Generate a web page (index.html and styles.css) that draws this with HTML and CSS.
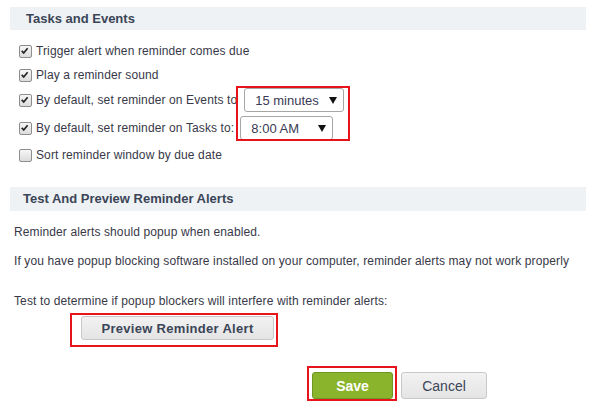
FILE: index.html
```html
<!DOCTYPE html>
<html lang="en">
<head>
    <meta charset="UTF-8">
    <meta name="viewport" content="width=device-width, initial-scale=1.0">
    <title>Reminder Settings</title>
    <link rel="stylesheet" href="styles.css">
</head>
<body>
    <div class="panel">
        <h2 class="section-title">Tasks and Events</h2>
        <div class="options">
            <div class="option row-1">
                <span class="check checked"><svg viewBox="0 0 13 13"><path d="M3 6.8 L5.4 9.2 L10 3.6"/></svg></span>
                <span>Trigger alert when reminder comes due</span>
            </div>
            <div class="option row-2">
                <span class="check checked"><svg viewBox="0 0 13 13"><path d="M3 6.8 L5.4 9.2 L10 3.6"/></svg></span>
                <span>Play a reminder sound</span>
            </div>
            <div class="option row-3">
                <span class="check checked"><svg viewBox="0 0 13 13"><path d="M3 6.8 L5.4 9.2 L10 3.6"/></svg></span>
                <span>By default, set reminder on Events to</span>
                <div class="select select-events"><span>15 minutes</span><span class="arrow"></span></div>
            </div>
            <div class="option row-4">
                <span class="check checked"><svg viewBox="0 0 13 13"><path d="M3 6.8 L5.4 9.2 L10 3.6"/></svg></span>
                <span>By default, set reminder on Tasks to:</span>
                <div class="select select-tasks"><span>8:00 AM</span><span class="arrow"></span></div>
            </div>
            <div class="option row-5">
                <span class="check"></span>
                <span>Sort reminder window by due date</span>
            </div>
            <!-- annotation around the two dropdowns -->
            <div class="highlight select-highlight"></div>
        </div>

        <h2 class="section-title section-title-second">Test And Preview Reminder Alerts</h2>
        <p class="note note-first">Reminder alerts should popup when enabled.</p>
        <p class="note">If you have popup blocking software installed on your computer, reminder alerts may not work properly</p>
        <p class="note note-test">Test to determine if popup blockers will interfere with reminder alerts:</p>
        <div class="preview-wrap">
            <span class="mark mark-preview"><button class="btn btn-gray btn-preview">Preview Reminder Alert</button></span>
        </div>

        <div class="actions">
            <span class="mark mark-save"><button class="btn btn-save">Save</button></span>
            <button class="btn btn-gray btn-cancel">Cancel</button>
        </div>
    </div>
</body>
</html>
```

FILE: styles.css
```css
body {
    margin: 0;
    font-family: "Liberation Sans", Arial, sans-serif;
    font-size: 12px;
    letter-spacing: 0.12px;
    color: #383848;
    background: #ffffff;
}

.panel {
    padding: 7px 3px 0 10px;
}

.section-title {
    margin: 0;
    height: 23px;
    line-height: 23px;
    padding-left: 16px;
    background: #eef2f4;
    font-size: 13px;
    font-weight: bold;
    letter-spacing: 0;
    color: #3b4557;
}

.section-title-second {
    margin-top: 20px;
    height: 24px;
    line-height: 24px;
    padding-left: 13px;
}

/* checkbox rows */
.options {
    position: relative;
    margin-top: 9px;
    padding-left: 9px;
}

.option {
    display: flex;
    align-items: center;
    height: 24px;
}

.row-3 {
    height: 26px;
}

.row-4 {
    height: 30px;
}

.check {
    width: 11px;
    height: 11px;
    border: 1px solid #8c8e90;
    border-radius: 2px;
    background: linear-gradient(#f6f6f6, #dcdcdc);
    margin-right: 4px;
    flex-shrink: 0;
}

.check svg {
    display: block;
    width: 11px;
    height: 11px;
}

.check path {
    fill: none;
    stroke: #262626;
    stroke-width: 2;
    transform: translate(-1px, -1px);
}

.select {
    display: flex;
    align-items: center;
    justify-content: space-between;
    box-sizing: border-box;
    height: 24px;
    border: 1px solid #a6a6a6;
    border-radius: 3px;
    background: #fff;
    font-size: 13px;
    letter-spacing: 0;
    color: #3a3a55;
    padding: 0 6px 0 10px;
}

.select-events {
    width: 100px;
    margin-left: 7px;
}

.select-tasks {
    width: 93px;
    margin-left: 6px;
}

.arrow {
    width: 0;
    height: 0;
    border-left: 4px solid transparent;
    border-right: 4px solid transparent;
    border-top: 7px solid #111;
}

.highlight {
    position: absolute;
    border: 2px solid #e8141b;
}

.select-highlight {
    left: 226px;
    top: 47px;
    width: 110px;
    height: 51px;
}

/* preview section */
.note {
    margin: 15px 0 0 4px;
    line-height: 14px;
}

.note-first {
    margin-top: 14px;
}

.note-test {
    margin-top: 26px;
}

.preview-wrap {
    margin: 5px 0 0 60px;
}

.mark {
    display: inline-block;
    border: 2px solid #e8141b;
}

.mark-preview {
    padding: 1px 2px 5px 9px;
}

.btn {
    display: block;
    box-sizing: border-box;
    margin: 0;
    border-radius: 3px;
    font-family: "Liberation Sans", Arial, sans-serif;
    letter-spacing: 0;
    cursor: pointer;
}

.btn-gray {
    border: 1px solid #c8c8c8;
    background: linear-gradient(#f2f2f2, #e4e4e4);
    color: #3b4557;
}

.btn-preview {
    width: 193px;
    height: 24px;
    font-size: 13px;
    font-weight: bold;
    letter-spacing: 0.3px;
}

.actions {
    display: flex;
    align-items: flex-start;
    gap: 4px;
    margin: 19px 0 0 297px;
}

.mark-save {
    padding: 4px 2px 0 3px;
}

.btn-save {
    width: 81px;
    height: 27px;
    border: 1px solid #6f9524;
    background: #8ab42c;
    color: #fff;
    font-size: 14px;
    font-weight: bold;
}

.btn-cancel {
    width: 86px;
    height: 27px;
    margin-top: 6px;
    font-size: 14px;
}
```
